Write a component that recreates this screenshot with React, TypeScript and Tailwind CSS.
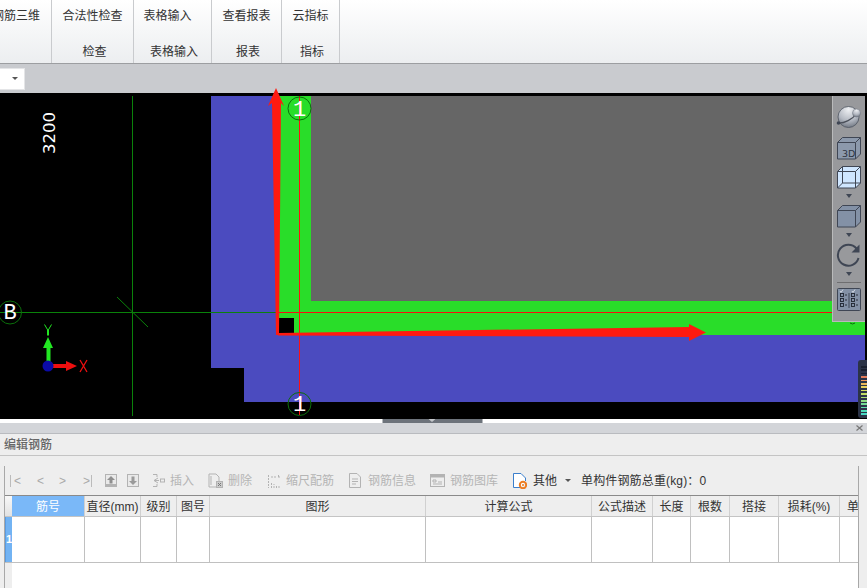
import React from "react";

const font = { fontFamily: '"Liberation Sans","Noto Sans CJK SC",sans-serif' };

function RibbonGroup({ w, top, bottom, topClass = "justify-center", bottomClass = "pl-[3px]" }: { w: string; top: string; bottom?: string; topClass?: string; bottomClass?: string }) {
  return (
    <div className={`${w} h-full shrink-0 flex flex-col border-r border-[#c9cbce] relative`}>
      <div className={`h-[32px] flex items-center whitespace-nowrap text-[#333] ${topClass}`}>{top}</div>
      <div className={`h-[31px] pt-[14px] flex justify-center text-[#333] ${bottomClass}`}>{bottom}</div>
    </div>
  );
}

function Drawing() {
  const dark = "#0b6f0b";
  return (
    <svg className="w-[867px] h-[326px] block overflow-visible relative z-10" viewBox="0 93 867 326">
      <polygon points="211,96 865,96 865,402 244,402 244,368 211,368" fill="#4b4bbf" />
      <polygon points="279,96 311,96 311,301 865,301 865,335 279,335" fill="#29dd29" />
      <rect x="311" y="96" width="554" height="205" fill="#666666" />
      <line x1="132.5" y1="96" x2="132.5" y2="416" stroke="#0a820a" />
      <line x1="117" y1="297" x2="148" y2="327" stroke="#0a820a" />
      <line x1="0" y1="312.5" x2="278" y2="312.5" stroke="#0a820a" />
      <line x1="278" y1="312.5" x2="865" y2="312.5" stroke="#f51010" />
      <line x1="299.5" y1="96" x2="299.5" y2="415" stroke="#ff1010" />
      <rect x="278" y="318" width="16" height="16" fill="#000" />
      <polygon points="276,335 279,335 281,103 284,106 276,88 268,106 272,103" fill="#ff1a10" />
      <polygon points="278,333 689,327 689,324 706,332.5 689,341 689,337 278,335.5" fill="#ff1a10" />
      {[[299.5, 108.5], [299.5, 404], [10, 312.5]].map(([cx, cy], i) => (
        <circle key={i} cx={cx} cy={cy} r="11.5" fill="none" stroke={dark} />
      ))}
      <g fill="#fff" fontFamily="Liberation Mono, monospace" fontSize="22" textAnchor="middle">
        <text x="299.5" y="116">1</text>
        <text x="299.5" y="411">1</text>
        <text x="10" y="319">B</text>
      </g>
      <text transform="translate(55,154) rotate(-90)" fill="#fff" fontFamily="DejaVu Sans, sans-serif" fontSize="16.5">3200</text>
      <polygon points="46.5,366 46.5,348 43,348 48,337 53,348 50.5,348 50.5,366" fill="#22e622" />
      <line x1="48" y1="330" x2="48" y2="335.5" stroke="#22e622" strokeWidth="2" />
      <polyline points="44.5,324.5 48,330.5 51.5,324.5" fill="none" stroke="#22e622" />
      <polygon points="48,364 66,364 66,361 77,366 66,371 66,368 48,368" fill="#ee0f0f" />
      <circle cx="48" cy="366" r="5.5" fill="#0b0ba8" />
      <path d="M80 360 L87 372 M87 360 L80 372" stroke="#ee0f0f" strokeWidth="1.3" fill="none" />
      <path d="M850 323 Q852.5 325 855 323" stroke="#0b6f0b" fill="none" />
    </svg>
  );
}

const line = "#3f4654";
function Arrow() {
  return (
    <svg width="8" height="4" viewBox="0 0 8 4" className="block">
      <polygon points="1,0 7,0 4,4" fill="#3f4654" />
    </svg>
  );
}

function Panel() {
  return (
    <div className="absolute left-[832px] top-[3px] w-[33px] h-[226px] z-20 bg-[#98999c] border-l border-b border-[#b9babb] flex flex-col items-center">
      <svg width="26" height="22" viewBox="0 0 26 22" className="mt-[10px] block">
        <defs>
          <radialGradient id="sp" cx="0.5" cy="0.15" r="0.95">
            <stop offset="0" stopColor="#eef0f3" />
            <stop offset="0.55" stopColor="#b4b9c2" />
            <stop offset="1" stopColor="#5f6672" />
          </radialGradient>
        </defs>
        <circle cx="12.5" cy="11" r="10.5" fill="url(#sp)" stroke="#4f5561" strokeWidth="0.8" />
        <path d="M1 17 C8 18 17 13 21 7" stroke="#4b505a" strokeWidth="1.2" fill="none" />
        <circle cx="2.5" cy="17" r="1.8" fill="#3f4654" />
        <circle cx="20.5" cy="7" r="4" fill="url(#sp)" stroke="#6b717c" strokeWidth="0.5" />
      </svg>
      <svg width="26" height="24" viewBox="0 0 26 24" className="mt-[8px] block">
        <path d="M1.5 6.5 L6.5 1.5 H24.5 V18 L19.5 23 H1.5 Z" fill="#8c99ac" stroke={line} />
        <path d="M1.5 6.5 H19.5 V23 M19.5 6.5 L24.5 1.5" fill="none" stroke={line} />
        <text x="6" y="21" fontSize="9.5" fill="#2d3340" fontFamily="DejaVu Sans, sans-serif">3D</text>
      </svg>
      <svg width="26" height="24" viewBox="0 0 26 24" className="mt-[5px] block">
        <path d="M1.5 6.5 L6.5 1.5 H24.5 V18 L19.5 23 H1.5 Z" fill="#cfe6ff" stroke={line} />
        <path d="M1.5 6.5 H19.5 V23 M19.5 6.5 L24.5 1.5 M6.5 1.5 V18 H24.5 M6.5 18 L1.5 23" fill="none" stroke={line} />
      </svg>
      <div className="mt-[5px]"><Arrow /></div>
      <svg width="26" height="24" viewBox="0 0 26 24" className="mt-[6px] block">
        <path d="M1.5 6.5 L6.5 1.5 H24.5 V18 L19.5 23 H1.5 Z" fill="#8391a6" stroke={line} />
        <path d="M1.5 6.5 H19.5 V23 M19.5 6.5 L24.5 1.5" fill="none" stroke={line} />
      </svg>
      <div className="mt-[5px]"><Arrow /></div>
      <svg width="26" height="24" viewBox="0 0 26 24" className="mt-[6px] block">
        <path d="M20.5 5.5 A10.5 10.5 0 1 0 22.5 15" fill="none" stroke="#3f4654" strokeWidth="2" />
        <polygon points="23.5,1.5 23.5,9.5 15.5,9.5" fill="#3f4654" />
      </svg>
      <div className="mt-[5px]"><Arrow /></div>
      <div className="mt-[6px] w-[24px] h-px bg-[#6e6e70]" />
      <svg width="24" height="24" viewBox="0 0 24 24" className="mt-[4px] block">
        <rect x="0.5" y="1.5" width="23" height="22" rx="1" fill="#8391a6" stroke={line} />
        <line x1="12" y1="6" x2="12" y2="21" stroke={line} />
        <path d="M3 4 L4 5.5 L6 2.5 M15 4 L16 5.5 L18 2.5" fill="none" stroke="#e8ecf2" strokeWidth="0.8" />
        {[8, 13, 18].map((y) => (
          <g key={y} fill="none" stroke="#1f2530" strokeWidth="0.9">
            <rect x="3.5" y={y - 1.5} width="3" height="3" />
            <line x1="8" y1={y} x2="10" y2={y} />
            <rect x="14.5" y={y - 1.5} width="3" height="3" />
            <line x1="19" y1={y} x2="21" y2={y} />
          </g>
        ))}
      </svg>
    </div>
  );
}

function Meter() {
  const cols = ["#1a2030","#1a2030","#1a2030","#e07a5a","#e8955a","#e8b65a","#e6cf5a","#d8dc60","#c0dc66","#a8dc72","#8edc84","#74dc96","#60dcaa","#50dcba","#48d8c4"];
  return (
    <div className="absolute left-[858px] top-[267px] w-[9px] h-[58px] z-20 bg-[#2b3347] rounded-l-[3px] pt-[6px] pl-[3px] flex flex-col gap-[1.8px]">
      {cols.map((c, i) => (
        <div key={i} className="w-[6px] h-[1.6px]" style={{ backgroundColor: c }} />
      ))}
    </div>
  );
}

function Nav({ t, w }: { t: string; w: string }) {
  return <span className={`${w} shrink-0 text-[#a9a9a9] text-[12px]`}>{t}</span>;
}

function ToolText({ t, w }: { t: string; w: string }) {
  return <span className={`${w} shrink-0 whitespace-nowrap text-[#b5b5b5]`}>{t}</span>;
}

const ic = "#b3b3b3";
const cols = [
  ["筋号", "w-[73px]"],
  ["直径(mm)", "w-[56px]"],
  ["级别", "w-[36px]"],
  ["图号", "w-[33px]"],
  ["图形", "w-[216px]"],
  ["计算公式", "w-[166px]"],
  ["公式描述", "w-[61px]"],
  ["长度", "w-[38px]"],
  ["根数", "w-[39px]"],
  ["搭接", "w-[49px]"],
  ["损耗(%)", "w-[61px]"],
  ["单", "w-[18px]"],
];

export default function App() {
  return (
    <div className="w-[867px] h-[588px] overflow-hidden flex flex-col text-[12px] leading-none bg-white" style={font}>
      <div className="h-[63px] shrink-0 flex bg-gradient-to-b from-[#ffffff] to-[#eceef0] overflow-hidden">
        <RibbonGroup w="w-[52px]" top="钢筋三维" topClass="justify-start -ml-[8px]" />
        <RibbonGroup w="w-[82px]" top="合法性检查" bottom="检查" bottomClass="pl-[4px]" />
        <RibbonGroup w="w-[78px]" top="表格输入" topClass="justify-center pr-[10px]" bottom="表格输入" />
        <RibbonGroup w="w-[70px]" top="查看报表" bottom="报表" />
        <RibbonGroup w="w-[58px]" top="云指标" bottom="指标" />
      </div>
      <div className="h-[30px] shrink-0 bg-[#c9cbcf] border-t border-[#9c9ea1] flex items-center">
        <div className="w-[25px] h-[22px] bg-white border border-[#e4e5e7] border-l-0 flex items-center justify-end pr-[6px]">
          <svg width="6" height="3" viewBox="0 0 6 3"><polygon points="0,0 6,0 3,3" fill="#555" /></svg>
        </div>
      </div>
      <div className="relative h-[326px] shrink-0 bg-black">
        <Drawing />
        <Panel />
        <Meter />
      </div>
      <div className="h-[4px] shrink-0 bg-white flex justify-center">
        <div className="w-[100px] h-full bg-[#6d737b] -translate-x-[1.5px] flex justify-center">
          <svg width="7" height="3" viewBox="0 0 7 3"><polygon points="0,0 7,0 3.5,3" fill="#c4c7cb" /></svg>
        </div>
      </div>
      <div className="h-[11px] shrink-0 bg-[#d3d5d9] border-b border-[#b9bbbf] flex items-center justify-end pr-[4px]">
        <svg width="7" height="6" viewBox="0 0 7 6"><path d="M0.5 0.5 L6.5 5.5 M6.5 0.5 L0.5 5.5" stroke="#777" strokeWidth="1.2" /></svg>
      </div>
      <div className="h-[22px] shrink-0 bg-[#eeeeee] border-b border-[#c4c4c4] flex items-center pl-[4px] text-[#666] font-medium">编辑钢筋</div>
      <div className="flex-1 bg-[#eeeeee] pt-[10px] pl-[4px] flex min-h-0">
        <div className="w-[855px] border-l border-r border-[#a8a8a8] flex flex-col min-h-0">
          <div className="h-[29px] shrink-0 flex items-center">
            <span className="ml-[5px] w-[1px] h-[12px] bg-[#bbb]" />
            <Nav t="<" w="w-[23px] ml-[3px]" />
            <Nav t="<" w="w-[22px]" />
            <Nav t=">" w="w-[24px]" />
            <Nav t=">" w="w-[8px]" />
            <span className="w-[1px] h-[12px] bg-[#bbb]" />
            <svg width="12" height="13" viewBox="0 0 12 13" className="ml-[13px] shrink-0">
              <rect width="12" height="13" fill={ic} />
              <rect x="1" y="1" width="10" height="9" fill="#e9e9e9" />
              <polygon points="6,2 10,6 7.5,6 7.5,9.5 4.5,9.5 4.5,6 2,6" fill="#8f8f8f" />
            </svg>
            <svg width="12" height="13" viewBox="0 0 12 13" className="ml-[10px] shrink-0">
              <rect width="12" height="13" fill={ic} />
              <rect x="1" y="1" width="10" height="11" fill="#e9e9e9" />
              <polygon points="6,11 10,7 7.5,7 7.5,2.5 4.5,2.5 4.5,7 2,7" fill="#9a9a9a" />
            </svg>
            <svg width="13" height="15" viewBox="0 0 13 15" className="ml-[13px] shrink-0" fill="none" stroke={ic}>
              <path d="M1 1.5 H5 V4 M1 13.5 H5 V11 M6 5 L2 7.5 L6 10 M2 7.5 H7" />
              <rect x="8.5" y="6" width="4" height="3" />
            </svg>
            <ToolText t="插入" w="ml-[5px] w-[24px]" />
            <svg width="15" height="15" viewBox="0 0 15 15" className="ml-[14px] shrink-0" fill="none" stroke={ic}>
              <path d="M1 14 V1 H8 L11 4 V8 M1 14 H8 M3 3 V12" />
              <rect x="8.5" y="8.5" width="6" height="6" fill="#ccc" />
              <path d="M10 10 L13 13 M13 10 L10 13" stroke="#777" />
            </svg>
            <ToolText t="删除" w="ml-[5px] w-[24px]" />
            <svg width="13" height="14" viewBox="0 0 13 14" className="ml-[16px] shrink-0" fill="none" stroke={ic}>
              <path d="M0.5 1 V14 M3 3 H9 M10.5 1 V4 M12 3 H10 M3.5 14 V8 M6 14 V10 M8.5 14 V11 M11 14 V12" strokeDasharray="2 1" />
            </svg>
            <ToolText t="缩尺配筋" w="ml-[5px] w-[48px]" />
            <svg width="12" height="15" viewBox="0 0 12 15" className="ml-[15px] shrink-0" fill="none" stroke={ic}>
              <path d="M0.5 0.5 H8 L11.5 4 V14.5 H0.5 Z M3 6 H9 M3 8.5 H9 M3 11 H7" />
            </svg>
            <ToolText t="钢筋信息" w="ml-[7px] w-[48px]" />
            <svg width="15" height="13" viewBox="0 0 15 13" className="ml-[14px] shrink-0" fill="none" stroke={ic}>
              <rect x="0.5" y="0.5" width="14" height="12" />
              <rect x="1" y="1" width="13" height="2" fill={ic} />
              <path d="M3 6 H6 V8 H3 Z M3 10 H12 M8 8 H12" />
            </svg>
            <ToolText t="钢筋图库" w="ml-[5px] w-[48px]" />
            <svg width="14" height="16" viewBox="0 0 14 16" className="ml-[15px] shrink-0">
              <path d="M8 14.5 H0.5 V0.5 H8 L12.5 5 V8" fill="#fff" stroke="#3b7fcc" />
              <circle cx="10" cy="12" r="3.2" fill="none" stroke="#ed7d22" strokeWidth="2" />
              <circle cx="10" cy="12" r="1" fill="#ed7d22" />
            </svg>
            <span className="ml-[6px] w-[24px] shrink-0 text-[#333]">其他</span>
            <svg width="6" height="3" viewBox="0 0 6 3" className="ml-[8px] shrink-0"><polygon points="0,0 6,0 3,3" fill="#555" /></svg>
            <span className="ml-[10px] whitespace-nowrap text-[#333] tracking-[0.15px]">单构件钢筋总重(kg)：0</span>
          </div>
          <div className="h-[22px] shrink-0 flex border-t border-b border-t-[#8a8a8a] border-b-[#c4c4c4] bg-[#eeeeee] overflow-hidden">
            <div className="w-[7px] shrink-0 bg-gradient-to-b from-[#f8f8f8] to-[#e2e2e2]" />
            {cols.map(([t, w], i) => (
              <div
                key={i}
                className={`${w} shrink-0 flex items-center justify-center pt-[1px] whitespace-nowrap border-r border-[#d0d0d0] ${i === 0 ? "bg-[#7ab8f8] text-white" : "text-[#333]"} ${i === 11 ? "border-r-0 justify-start pl-[7px]" : ""}`}
              >
                {t}
              </div>
            ))}
          </div>
          <div className="h-[46px] shrink-0 flex border-b border-[#c0c0c0] bg-white">
            <div className="w-[7px] shrink-0 bg-[#72b3f3] border-l border-[#5a9be0] flex items-center overflow-hidden text-white font-bold text-[11px]">1</div>
            {cols.map(([, w], i) => (
              <div key={i} className={`${w} shrink-0 border-r border-[#c0c0c0] ${i === 11 ? "border-r-0" : ""}`} />
            ))}
          </div>
          <div className="flex-1 flex bg-white">
            <div className="w-[7px] bg-[#eeeeee]" />
          </div>
        </div>
      </div>
    </div>
  );
}
